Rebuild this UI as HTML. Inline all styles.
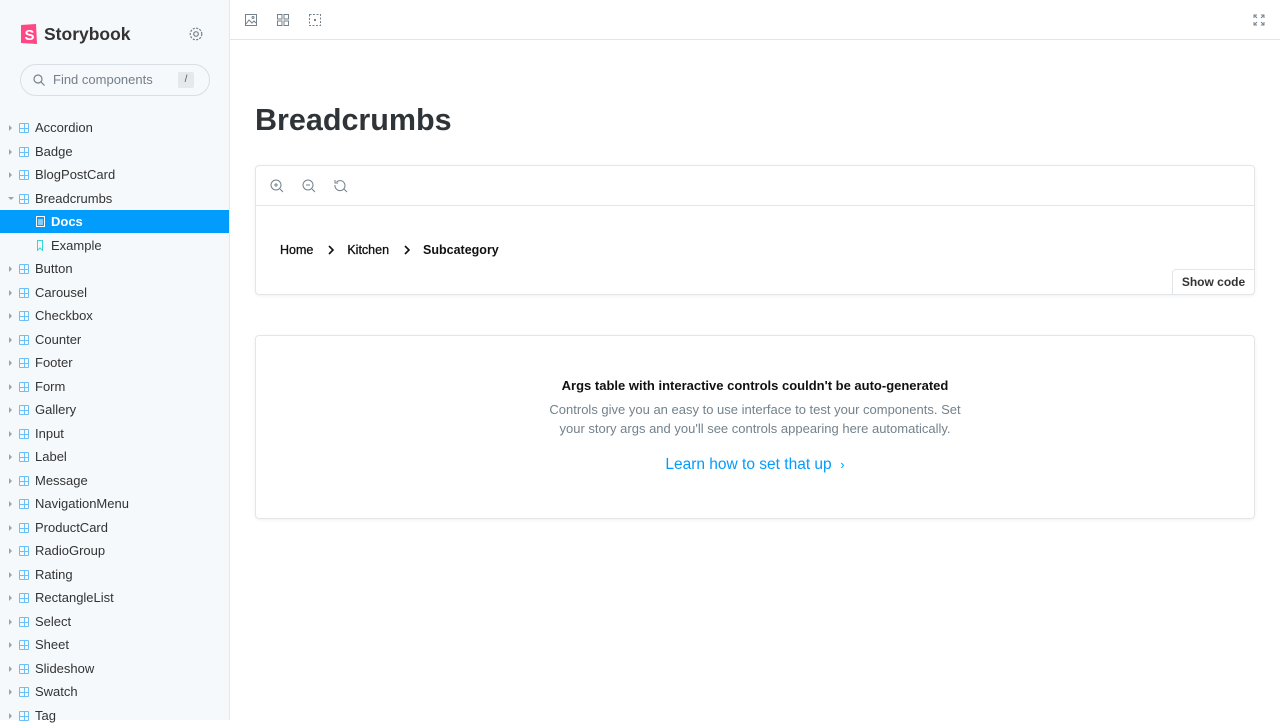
<!DOCTYPE html>
<html><head><meta charset="utf-8"><style>
*{box-sizing:border-box;margin:0;padding:0}
body{width:1280px;height:720px;overflow:hidden;font-family:"Liberation Sans",sans-serif;background:#fff;position:relative}
#sb{position:absolute;left:0;top:0;width:230px;height:720px;background:#f6f9fc;border-right:1px solid #e3e8ee}
.logo{position:absolute;left:20px;top:23px;display:flex;align-items:center;gap:6px;font-weight:bold;font-size:17.5px;color:#333}
.search{position:absolute;left:20px;top:64px;width:190px;height:32px;border:1px solid #d9dee3;border-radius:16px;font-size:13px;color:#747f8a;padding-left:32px;line-height:30px}
.search .k{position:absolute;right:15px;top:7px;width:16px;height:16px;background:#e6e9ec;border-radius:2px;font-size:10px;text-align:center;line-height:16px;color:#555}
.it{position:absolute;left:0;width:229px;height:23px;font-size:13px;color:#333;line-height:23px}
.it .ar{position:absolute;left:9px;top:9px;width:0;height:0;border-left:3px solid #9aa3ab;border-top:3px solid transparent;border-bottom:3px solid transparent}
.it .g{position:absolute;left:19px;top:7px;width:10px;height:10px;border:1px solid #6cc0f8;border-radius:1px;background:linear-gradient(#6cc0f8,#6cc0f8) 50% 0/1px 100% no-repeat,linear-gradient(#6cc0f8,#6cc0f8) 0 50%/100% 1px no-repeat}
.it span.t{position:absolute;left:35px}
.sel{background:#029cfd;color:#fff;font-weight:bold}
#tb{position:absolute;left:230px;top:0;right:0;height:40px;border-bottom:1px solid #e3e6e8}
h1{position:absolute;left:255px;top:103px;font-size:30.5px;color:#2e3438;font-weight:bold}
.card{position:absolute;left:255px;width:1000px;border:1px solid #e3e6e8;border-radius:4px;box-shadow:0 1px 3px rgba(0,0,0,.06)}
</style></head><body>
<div id="sb">
<div class="logo"><svg width="18" height="22" viewBox="0 0 18 22"><path d="M1 2l15-1 1 20-16-1z" fill="#ff4785"/><text x="4.5" y="17" font-size="15" font-weight="bold" fill="#fff" font-family="Liberation Sans">S</text></svg>Storybook</div>
<svg style="position:absolute;left:188px;top:26px" width="16" height="16" viewBox="0 0 16 16" fill="none" stroke="#73828c" stroke-width="1.2"><circle cx="8" cy="8" r="2.3"/><circle cx="8" cy="8" r="5.8" stroke-dasharray="2.2 1.2"/></svg>
<div class="search"><svg style="position:absolute;left:12px;top:9px" width="12" height="12" viewBox="0 0 12 12" fill="none" stroke="#73828c" stroke-width="1.2"><circle cx="5" cy="5" r="4"/><path d="M8 8l3.5 3.5"/></svg>Find components<div class="k">/</div></div>
<div class="it" style="top:116px"><i class="ar"></i><i class="g"></i><span class="t">Accordion</span></div>
<div class="it" style="top:140px"><i class="ar"></i><i class="g"></i><span class="t">Badge</span></div>
<div class="it" style="top:163px"><i class="ar"></i><i class="g"></i><span class="t">BlogPostCard</span></div>
<div class="it" style="top:187px"><i class="ar" style="left:8px;top:10px;border-top:3px solid #9aa3ab;border-left:3px solid transparent;border-right:3px solid transparent;border-bottom:0"></i><i class="g"></i><span class="t">Breadcrumbs</span></div>
<div class="it sel" style="top:210px"><svg style="position:absolute;left:36px;top:6px" width="9" height="11" viewBox="0 0 9 11" fill="none" stroke="#fff"><rect x=".5" y=".5" width="8" height="10"/><path d="M2 4h5M2 6h5M2 8h5"/></svg><span class="t" style="left:51px">Docs</span></div>
<div class="it" style="top:234px"><svg style="position:absolute;left:37px;top:6px" width="6" height="11" viewBox="0 0 6 11" fill="none" stroke="#37d5d3"><path d="M.5.5h5v10L3 8 .5 10.5z"/></svg><span class="t" style="left:51px">Example</span></div>
<div class="it" style="top:257px"><i class="ar"></i><i class="g"></i><span class="t">Button</span></div>
<div class="it" style="top:281px"><i class="ar"></i><i class="g"></i><span class="t">Carousel</span></div>
<div class="it" style="top:304px"><i class="ar"></i><i class="g"></i><span class="t">Checkbox</span></div>
<div class="it" style="top:328px"><i class="ar"></i><i class="g"></i><span class="t">Counter</span></div>
<div class="it" style="top:351px"><i class="ar"></i><i class="g"></i><span class="t">Footer</span></div>
<div class="it" style="top:375px"><i class="ar"></i><i class="g"></i><span class="t">Form</span></div>
<div class="it" style="top:398px"><i class="ar"></i><i class="g"></i><span class="t">Gallery</span></div>
<div class="it" style="top:422px"><i class="ar"></i><i class="g"></i><span class="t">Input</span></div>
<div class="it" style="top:445px"><i class="ar"></i><i class="g"></i><span class="t">Label</span></div>
<div class="it" style="top:469px"><i class="ar"></i><i class="g"></i><span class="t">Message</span></div>
<div class="it" style="top:492px"><i class="ar"></i><i class="g"></i><span class="t">NavigationMenu</span></div>
<div class="it" style="top:516px"><i class="ar"></i><i class="g"></i><span class="t">ProductCard</span></div>
<div class="it" style="top:539px"><i class="ar"></i><i class="g"></i><span class="t">RadioGroup</span></div>
<div class="it" style="top:563px"><i class="ar"></i><i class="g"></i><span class="t">Rating</span></div>
<div class="it" style="top:586px"><i class="ar"></i><i class="g"></i><span class="t">RectangleList</span></div>
<div class="it" style="top:610px"><i class="ar"></i><i class="g"></i><span class="t">Select</span></div>
<div class="it" style="top:633px"><i class="ar"></i><i class="g"></i><span class="t">Sheet</span></div>
<div class="it" style="top:657px"><i class="ar"></i><i class="g"></i><span class="t">Slideshow</span></div>
<div class="it" style="top:680px"><i class="ar"></i><i class="g"></i><span class="t">Swatch</span></div>
<div class="it" style="top:704px"><i class="ar"></i><i class="g"></i><span class="t">Tag</span></div>
</div>
<div id="tb">
<svg style="position:absolute;left:15px;top:14px" width="12" height="12" viewBox="0 0 12 12" fill="none" stroke="#73828c"><rect x=".5" y=".5" width="11" height="11"/><path d="M1 10l3-4 3 3 2-2 2 2"/><circle cx="8" cy="3.5" r="1"/></svg>
<svg style="position:absolute;left:47px;top:14px" width="12" height="12" viewBox="0 0 12 12" fill="none" stroke="#73828c"><rect x=".5" y=".5" width="4.5" height="4.5"/><rect x="7" y=".5" width="4.5" height="4.5"/><rect x=".5" y="7" width="4.5" height="4.5"/><rect x="7" y="7" width="4.5" height="4.5"/></svg>
<svg style="position:absolute;left:79px;top:14px" width="12" height="12" viewBox="0 0 12 12" fill="none" stroke="#73828c"><rect x=".5" y=".5" width="11" height="11" stroke-dasharray="2 1.5"/><rect x="5.5" y="5.5" width="1" height="1"/></svg>
<svg style="position:absolute;left:1023px;top:14px" width="12" height="12" viewBox="0 0 12 12" fill="none" stroke="#73828c"><path d="M1 4V1h3M8 1h3v3M11 8v3H8M4 11H1V8M1 1l3 3M11 1L8 4M11 11L8 8M1 11l3-3"/></svg>
</div>
<h1>Breadcrumbs</h1>
<div class="card" style="top:165px;height:130px">
<div style="height:40px;border-bottom:1px solid #e3e6e8;position:relative">
<svg style="position:absolute;left:14px;top:13px" width="14" height="14" viewBox="0 0 14 14" fill="none" stroke="#73828c"><circle cx="6" cy="6" r="5"/><path d="M10 10l3 3M4 6h4M6 4v4"/></svg>
<svg style="position:absolute;left:46px;top:13px" width="14" height="14" viewBox="0 0 14 14" fill="none" stroke="#73828c"><circle cx="6" cy="6" r="5"/><path d="M10 10l3 3M4 6h4"/></svg>
<svg style="position:absolute;left:78px;top:13px" width="14" height="14" viewBox="0 0 14 14" fill="none" stroke="#73828c"><path d="M2.5 3A5 5 0 1 1 1 6M1 1v3h3M10 10l3 3"/></svg>
</div>
<div style="position:absolute;left:24px;top:77px;font-size:12.5px;color:#111;display:flex;align-items:center">
<span style="-webkit-text-stroke:0.3px #111">Home</span><svg style="margin:0 12px 0 14px" width="8" height="10" viewBox="0 0 8 10" fill="none" stroke="#111" stroke-width="1.6"><path d="M2 1l4 4-4 4"/></svg><span style="-webkit-text-stroke:0.3px #111">Kitchen</span><svg style="margin:0 12px 0 14px" width="8" height="10" viewBox="0 0 8 10" fill="none" stroke="#111" stroke-width="1.6"><path d="M2 1l4 4-4 4"/></svg><b>Subcategory</b></div>
<div style="position:absolute;right:-1px;bottom:-1px;width:83px;height:26px;border:1px solid #e3e6e8;border-radius:4px 0 4px 0;font-size:12px;font-weight:bold;color:#333;text-align:center;line-height:24px;background:#fff">Show code</div>
</div>
<div class="card" style="top:335px;height:184px;text-align:center">
<div style="margin-top:42px;font-size:13px;font-weight:bold;color:#111">Args table with interactive controls couldn't be auto-generated</div>
<div style="margin:7px auto 0;width:420px;font-size:13px;color:#73828c;line-height:19px">Controls give you an easy to use interface to test your components. Set your story args and you'll see controls appearing here automatically.</div>
<div style="margin-top:18px;font-size:15.5px;color:#029cfd">Learn how to set that up&nbsp; <span style="font-size:13px">›</span></div>
</div>
</body></html>
